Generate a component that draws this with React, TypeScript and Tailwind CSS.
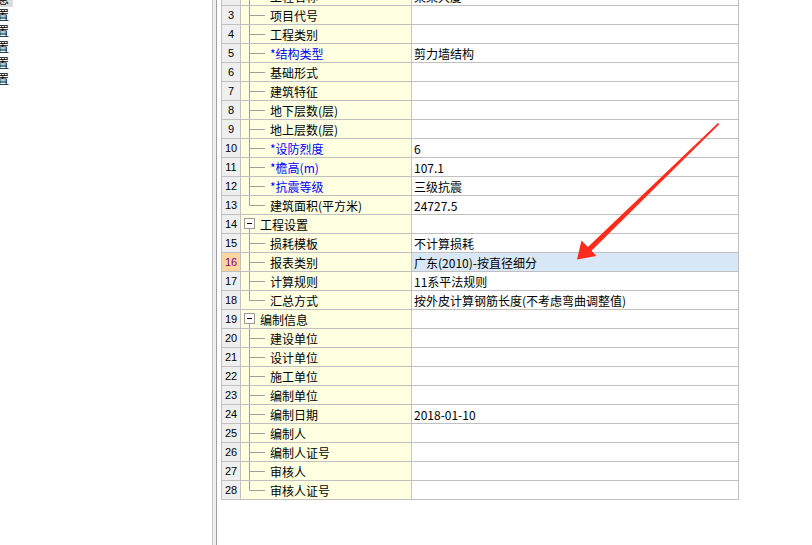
import React from 'react';

// grid rows of the project-info sheet
interface Row {
  n: number;
  label: string;
  value?: string;
  req?: boolean;
  group?: boolean;
  last?: boolean;
  sel?: boolean;
}

const rows: Row[] = [
  { n: 1, label: '工程信息', group: true },
  { n: 2, label: '工程名称', value: '某某大厦' },
  { n: 3, label: '项目代号' },
  { n: 4, label: '工程类别' },
  { n: 5, label: '*结构类型', value: '剪力墙结构', req: true },
  { n: 6, label: '基础形式' },
  { n: 7, label: '建筑特征' },
  { n: 8, label: '地下层数(层)' },
  { n: 9, label: '地上层数(层)' },
  { n: 10, label: '*设防烈度', value: '6', req: true },
  { n: 11, label: '*檐高(m)', value: '107.1', req: true },
  { n: 12, label: '*抗震等级', value: '三级抗震', req: true },
  { n: 13, label: '建筑面积(平方米)', value: '24727.5', last: true },
  { n: 14, label: '工程设置', group: true },
  { n: 15, label: '损耗模板', value: '不计算损耗' },
  { n: 16, label: '报表类别', value: '广东(2010)-按直径细分', sel: true },
  { n: 17, label: '计算规则', value: '11系平法规则' },
  { n: 18, label: '汇总方式', value: '按外皮计算钢筋长度(不考虑弯曲调整值)', last: true },
  { n: 19, label: '编制信息', group: true },
  { n: 20, label: '建设单位' },
  { n: 21, label: '设计单位' },
  { n: 22, label: '施工单位' },
  { n: 23, label: '编制单位' },
  { n: 24, label: '编制日期', value: '2018-01-10' },
  { n: 25, label: '编制人' },
  { n: 26, label: '编制人证号' },
  { n: 27, label: '审核人' },
  { n: 28, label: '审核人证号', last: true },
];

const navItems = ['工程信息', '比重设置', '弯钩设置', '损耗设置', '计算设置', '楼层设置'];

const cjk = { fontFamily: '"Noto Sans CJK SC", "Noto Sans", sans-serif' };

function TreeMark({ row }: { row: Row }) {
  if (row.group) {
    return (
      <svg width="19" height="18" className="shrink-0">
        <rect x="3.5" y="3.5" width="10" height="10" fill="#ffffff" stroke="#9a9a9a" />
        <line x1="6" y1="8.5" x2="11" y2="8.5" stroke="#000000" />
        <line x1="8.5" y1="14" x2="8.5" y2="18" stroke="#a0a0a0" />
      </svg>
    );
  }
  return (
    <svg width="29" height="18" className="shrink-0">
      <line x1="8.5" y1="0" x2="8.5" y2={row.last ? 9.5 : 18} stroke="#a0a0a0" />
      <line x1="8.5" y1="9.5" x2="24" y2="9.5" stroke="#a0a0a0" />
    </svg>
  );
}

function GridRow({ row }: { row: Row }) {
  return (
    <div className="flex h-[19px] border-b border-[#c0c0c0]">
      <div
        className={`w-[19px] shrink-0 border-r border-[#c0c0c0] text-center text-[11px] leading-[18px] ${
          row.sel ? 'bg-[#fdd59e] text-[#800080]' : 'bg-[#efefef] text-black'
        }`}
        style={{ fontFamily: '"Liberation Sans", Arial, sans-serif' }}
      >
        {row.n}
      </div>
      <div className="flex w-[171px] shrink-0 items-center border-r border-[#c8c8b8] bg-[#ffffe1]">
        <TreeMark row={row} />
        <span
          className={`whitespace-nowrap pt-px text-[12px] leading-[18px] ${row.req ? 'text-[#0000ff]' : 'text-black'}`}
          style={cjk}
        >
          {row.label}
        </span>
      </div>
      <div
        className={`w-[327px] shrink-0 border-r border-[#c0c0c0] pl-[2px] pt-px text-[12px] leading-[18px] text-black whitespace-nowrap ${
          row.sel ? 'bg-[#d9e8f7]' : 'bg-white'
        }`}
        style={cjk}
      >
        {row.value}
      </div>
    </div>
  );
}

function Arrow() {
  return (
    <svg className="pointer-events-none absolute left-0 top-0" width="812" height="545">
      <polygon points="718,123 719.3,124.3 591,251.2 587.4,247.6" fill="#ff2b1c" />
      <polygon points="577,259.5 581.5,240.5 596.5,256" fill="#ff2b1c" />
    </svg>
  );
}

export default function App() {
  return (
    <div className="relative flex h-[545px] w-[812px] overflow-hidden bg-white">
      {/* left nav, scrolled horizontally */}
      <div className="w-[212px] shrink-0 overflow-hidden bg-white">
        <div className="ml-[-39px] mt-[-9px] flex flex-col">
          {navItems.map((item, i) => (
            <div key={item} className="h-4 text-[12px] leading-4 text-black" style={cjk}>
              <span className={`inline-block pr-[4px] ${i === 0 ? 'bg-[#dcdcdc]' : ''}`}>{item}</span>
            </div>
          ))}
        </div>
      </div>

      {/* splitter */}
      <div className="w-[5px] shrink-0 border-l border-r border-l-[#c4c4c4] border-r-[#a0a0a0] bg-[#f0f0f0]" />

      {/* grid */}
      <div className="flex-1 overflow-hidden bg-white pl-[4px]">
        <div className="mt-[-32px] w-[518px] border-l border-[#c0c0c0]">
          {rows.map((r) => (
            <GridRow key={r.n} row={r} />
          ))}
        </div>
      </div>

      <Arrow />
    </div>
  );
}
